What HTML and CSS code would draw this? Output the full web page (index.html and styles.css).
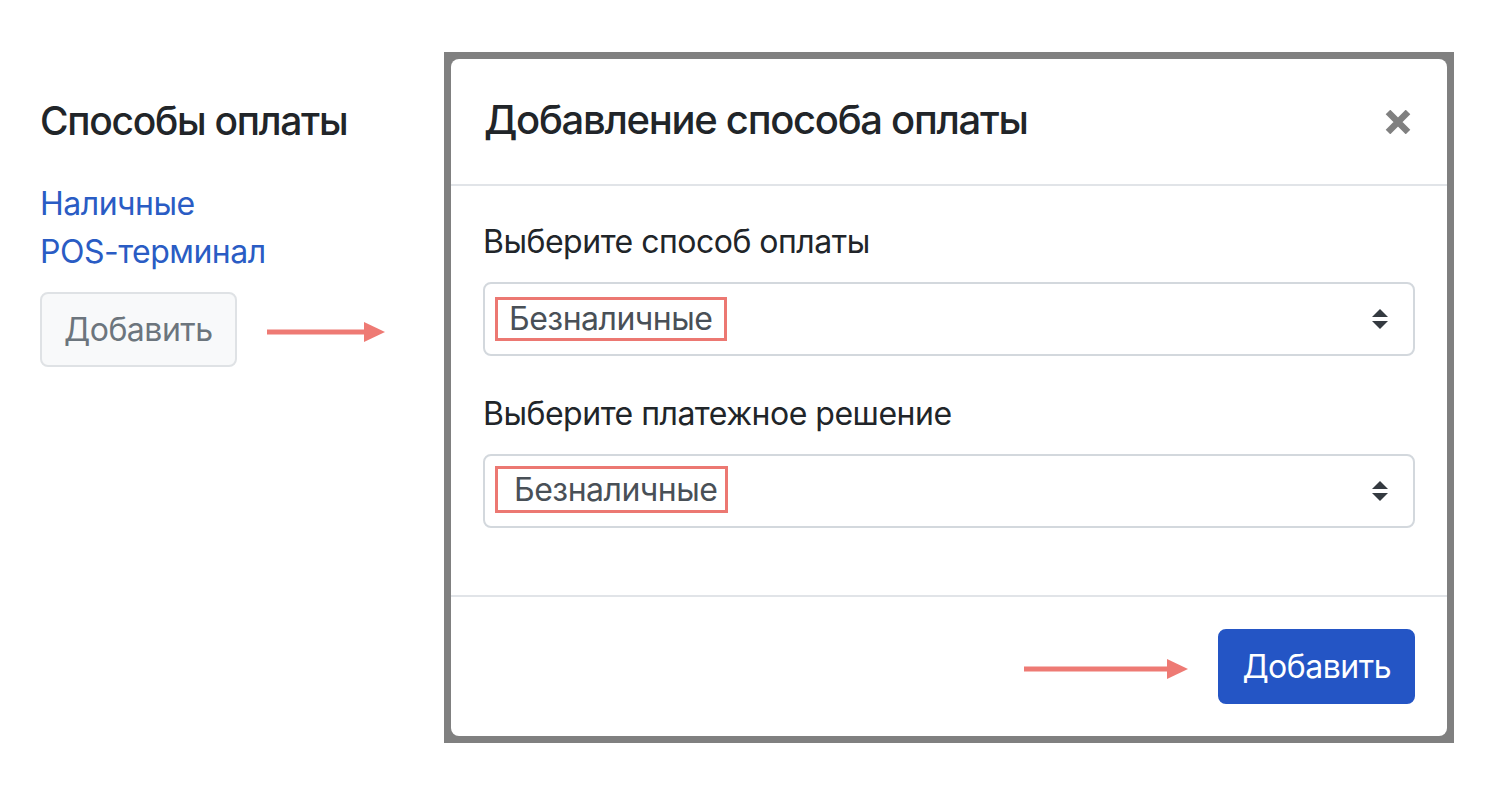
FILE: index.html
```html
<!DOCTYPE html>
<html lang="ru">
<head>
    <meta charset="UTF-8">
    <meta name="viewport" content="width=device-width, initial-scale=1.0">
    <title>Способы оплаты</title>
    <link rel="stylesheet" href="styles.css">
</head>
<body>
    <div class="page">
        <div class="side">
            <h5 class="side-title">Способы оплаты</h5>
            <ul class="method-list">
                <li><a href="#">Наличные</a></li>
                <li><a href="#">POS-терминал</a></li>
            </ul>
            <div class="btn-row">
                <button class="btn btn-light">Добавить</button>
                <svg class="arrow arrow-short" width="118" height="20" viewBox="0 0 118 20">
                    <rect x="0" y="7.5" width="100" height="5" fill="#ee7a74"/>
                    <polygon points="97,0 118,10 97,20" fill="#ee7a74"/>
                </svg>
            </div>
        </div>

        <div class="shot">
            <div class="modal">
                <div class="modal-header">
                    <h5 class="modal-title">Добавление способа оплаты</h5>
                    <button class="close" aria-label="Закрыть">
                        <svg width="26" height="24" viewBox="0 0 26 24">
                            <path d="M3 2 L23 22 M23 2 L3 22" stroke="#808080" stroke-width="6.5" fill="none"/>
                        </svg>
                    </button>
                </div>

                <div class="modal-body">
                    <div class="form-group">
                        <label>Выберите способ оплаты</label>
                        <div class="select">
                            <span class="mark">Безналичные</span>
                            <svg class="select-icon" width="16" height="20" viewBox="0 0 4 5">
                                <path d="M2 0L0 2h4zm0 5L0 3h4z" fill="#343a40"/>
                            </svg>
                        </div>
                    </div>
                    <div class="form-group">
                        <label>Выберите платежное решение</label>
                        <div class="select">
                            <span class="mark mark-wide">Безналичные</span>
                            <svg class="select-icon" width="16" height="20" viewBox="0 0 4 5">
                                <path d="M2 0L0 2h4zm0 5L0 3h4z" fill="#343a40"/>
                            </svg>
                        </div>
                    </div>
                </div>

                <div class="modal-footer">
                    <svg class="arrow" width="164" height="20" viewBox="0 0 164 20">
                        <rect x="0" y="7.5" width="146" height="5" fill="#ee7a74"/>
                        <polygon points="143,0 164,10 143,20" fill="#ee7a74"/>
                    </svg>
                    <button class="btn btn-primary">Добавить</button>
                </div>
            </div>
        </div>
    </div>
</body>
</html>
```

FILE: styles.css
```css
body {
    margin: 0;
    font-family: Inter, "Noto Sans", sans-serif;
    color: #212529;
    background: #fff;
    letter-spacing: -0.5px;
}
.page {
    display: flex;
    align-items: flex-start;
    gap: 40px;
    padding: 52px 0 0 40px;
}
.side {
    width: 364px;
    padding-top: 45px;
}
.side-title {
    font-size: 39px;
    font-weight: 500;
    line-height: 48px;
    letter-spacing: -1.3px;
    margin: 0 0 35px;
}
.method-list {
    list-style: none;
    margin: 0 0 16px;
    padding: 0;
    font-size: 32px;
    line-height: 48px;
}
.method-list a {
    color: #2a5cc4;
    text-decoration: none;
}
.btn-row {
    display: flex;
    align-items: center;
    gap: 30px;
}
.arrow {
    display: block;
    margin-top: 4px;
}
.btn {
    font-family: inherit;
    letter-spacing: inherit;
    font-size: 32px;
    line-height: 48px;
    height: 75px;
    padding: 0 22px;
    border-radius: 8px;
    border: 2px solid transparent;
    cursor: pointer;
}
.btn-light {
    background-color: #f8f9fa;
    border-color: #dfe2e5;
    color: #6c757d;
}
.btn-primary {
    background-color: #2455c5;
    border-color: #2455c5;
    color: #fff;
}
.shot {
    width: 996px;
    padding: 7px;
    background-color: #808080;
}
.modal {
    background-color: #fff;
    border-radius: 8px;
}
.modal-header {
    display: flex;
    justify-content: space-between;
    align-items: center;
    padding: 31px 36px 34px 33px;
    border-bottom: 2px solid #e1e4e8;
}
.modal-title {
    margin: 0;
    font-size: 40px;
    font-weight: 500;
    line-height: 60px;
    letter-spacing: -1.3px;
}
.close {
    background: none;
    border: none;
    padding: 0;
    display: flex;
    margin-top: 3px;
    cursor: pointer;
}
.modal-body {
    padding: 32px;
}
.form-group {
    margin-bottom: 34px;
}
.form-group:last-child {
    margin-bottom: 35px;
}
.form-group label {
    display: block;
    font-size: 32px;
    line-height: 48px;
    margin-bottom: 16px;
}
.select {
    display: flex;
    align-items: center;
    justify-content: space-between;
    height: 74px;
    box-sizing: border-box;
    border: 2px solid #d3d8dd;
    border-radius: 8px;
    padding: 0 25px 0 24px;
    font-size: 32px;
    color: #495057;
}
.mark {
    display: inline-block;
    line-height: 38px;
    border: 3px solid #ec7872;
    padding: 0 12px 0 11px;
    margin-left: -14px;
}
.mark-wide {
    line-height: 41px;
    padding: 0 8px 0 16px;
    margin-top: -3px;
}
.select-icon {
    display: block;
}
.modal-footer {
    display: flex;
    justify-content: flex-end;
    align-items: center;
    gap: 30px;
    padding: 32px;
    border-top: 2px solid #e1e4e8;
}
```
